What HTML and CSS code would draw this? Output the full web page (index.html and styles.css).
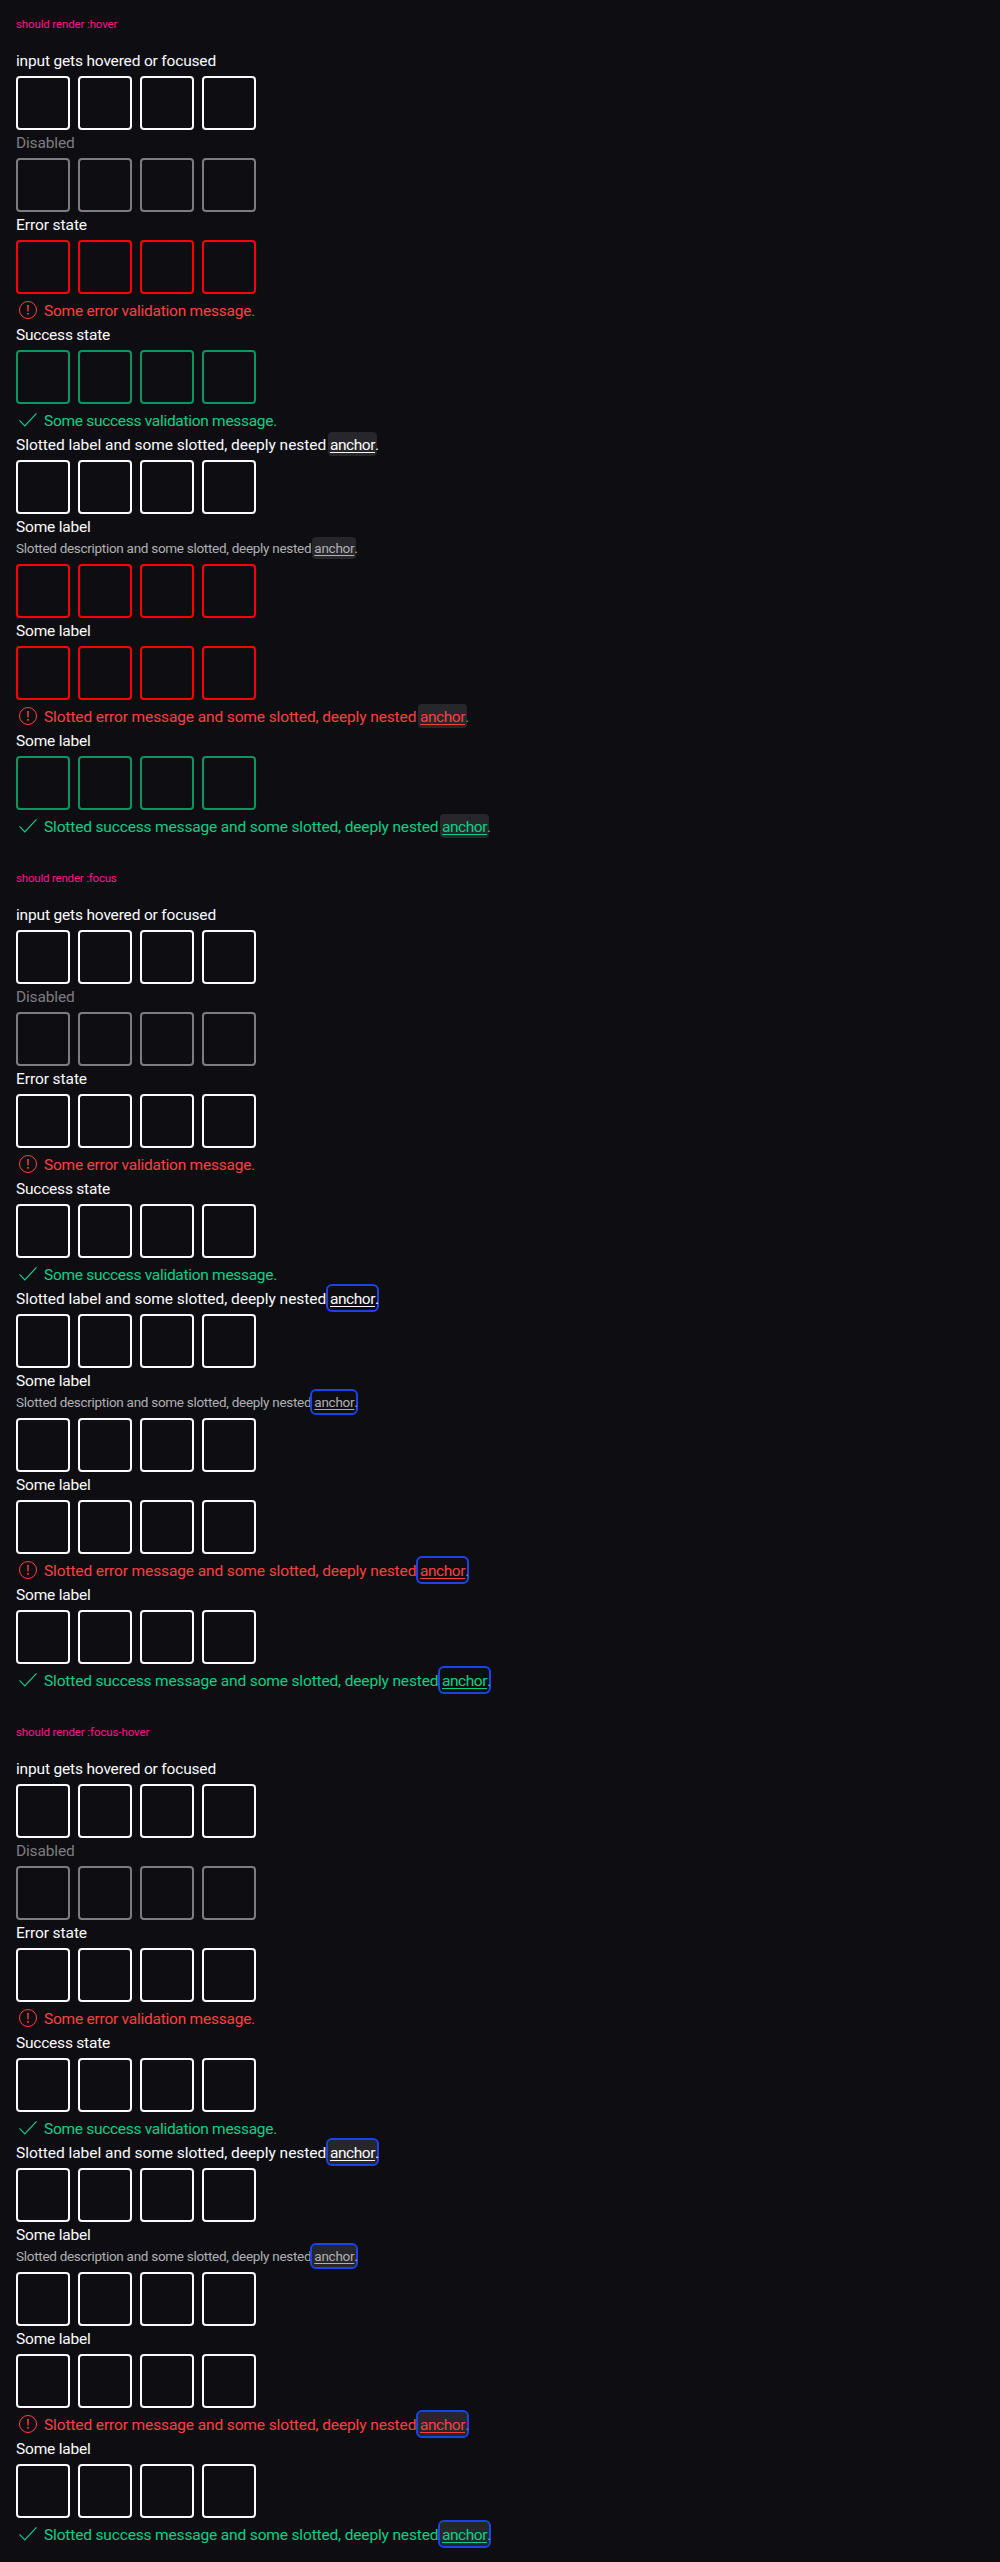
FILE: index.html
```html
<!DOCTYPE html>
<html lang="en">
<head>
<meta charset="utf-8">
<title>Pin code states</title>
<link rel="stylesheet" href="styles.css">
</head>
<body>
<svg class="sprite" aria-hidden="true">
  <symbol id="error" viewBox="0 0 24 24"><circle cx="12" cy="12" r="8.5" fill="none" stroke="currentColor"/><path d="M11.2 7h1.6l-.2 6.5h-1.2zM11.2 15h1.6v1.7h-1.6z" fill="currentColor"/></symbol>
  <symbol id="check" viewBox="0 0 24 24"><path d="M3.5 12.3 8.8 17.9 20.5 5.4" fill="none" stroke="currentColor" stroke-width="1.2"/></symbol>
</svg>

<section class="states hover">
  <h2 class="title t-hover">should render :hover</h2>
  <div class="label t-input">input gets hovered or focused</div>
  <div class="pins"><i></i><i></i><i></i><i></i></div>
  <div class="label disabled">Disabled</div>
  <div class="pins off"><i></i><i></i><i></i><i></i></div>
  <div class="label t-error">Error state</div>
  <div class="pins error"><i></i><i></i><i></i><i></i></div>
  <div class="message bad"><svg><use href="#error"/></svg><span class="t-some-error">Some error validation message.</span></div>
  <div class="label t-success">Success state</div>
  <div class="pins success"><i></i><i></i><i></i><i></i></div>
  <div class="message good"><svg><use href="#check"/></svg><span class="t-some-success">Some success validation message.</span></div>
  <div class="label t-slotted">Slotted label and some slotted, deeply nested <a>anchor</a>.</div>
  <div class="pins"><i></i><i></i><i></i><i></i></div>
  <div class="label t-some">Some label</div>
  <div class="description">Slotted description and some slotted, deeply nested <a>anchor</a>.</div>
  <div class="pins error"><i></i><i></i><i></i><i></i></div>
  <div class="label t-some">Some label</div>
  <div class="pins error"><i></i><i></i><i></i><i></i></div>
  <div class="message bad"><svg><use href="#error"/></svg><span class="t-slotted-error">Slotted error message and some slotted, deeply nested <a>anchor</a>.</span></div>
  <div class="label t-some">Some label</div>
  <div class="pins success"><i></i><i></i><i></i><i></i></div>
  <div class="message good"><svg><use href="#check"/></svg><span class="t-slotted-success">Slotted success message and some slotted, deeply nested <a>anchor</a>.</span></div>
</section>

<section class="states focus">
  <h2 class="title t-focus">should render :focus</h2>
  <div class="label t-input">input gets hovered or focused</div>
  <div class="pins"><i></i><i></i><i></i><i></i></div>
  <div class="label disabled">Disabled</div>
  <div class="pins off"><i></i><i></i><i></i><i></i></div>
  <div class="label t-error">Error state</div>
  <div class="pins"><i></i><i></i><i></i><i></i></div>
  <div class="message bad"><svg><use href="#error"/></svg><span class="t-some-error">Some error validation message.</span></div>
  <div class="label t-success">Success state</div>
  <div class="pins"><i></i><i></i><i></i><i></i></div>
  <div class="message good"><svg><use href="#check"/></svg><span class="t-some-success">Some success validation message.</span></div>
  <div class="label t-slotted">Slotted label and some slotted, deeply nested <a>anchor</a>.</div>
  <div class="pins"><i></i><i></i><i></i><i></i></div>
  <div class="label t-some">Some label</div>
  <div class="description">Slotted description and some slotted, deeply nested <a>anchor</a>.</div>
  <div class="pins"><i></i><i></i><i></i><i></i></div>
  <div class="label t-some">Some label</div>
  <div class="pins"><i></i><i></i><i></i><i></i></div>
  <div class="message bad"><svg><use href="#error"/></svg><span class="t-slotted-error">Slotted error message and some slotted, deeply nested <a>anchor</a>.</span></div>
  <div class="label t-some">Some label</div>
  <div class="pins"><i></i><i></i><i></i><i></i></div>
  <div class="message good"><svg><use href="#check"/></svg><span class="t-slotted-success">Slotted success message and some slotted, deeply nested <a>anchor</a>.</span></div>
</section>

<section class="states hover focus">
  <h2 class="title t-focus-hover">should render :focus-hover</h2>
  <div class="label t-input">input gets hovered or focused</div>
  <div class="pins"><i></i><i></i><i></i><i></i></div>
  <div class="label disabled">Disabled</div>
  <div class="pins off"><i></i><i></i><i></i><i></i></div>
  <div class="label t-error">Error state</div>
  <div class="pins"><i></i><i></i><i></i><i></i></div>
  <div class="message bad"><svg><use href="#error"/></svg><span class="t-some-error">Some error validation message.</span></div>
  <div class="label t-success">Success state</div>
  <div class="pins"><i></i><i></i><i></i><i></i></div>
  <div class="message good"><svg><use href="#check"/></svg><span class="t-some-success">Some success validation message.</span></div>
  <div class="label t-slotted">Slotted label and some slotted, deeply nested <a>anchor</a>.</div>
  <div class="pins"><i></i><i></i><i></i><i></i></div>
  <div class="label t-some">Some label</div>
  <div class="description">Slotted description and some slotted, deeply nested <a>anchor</a>.</div>
  <div class="pins"><i></i><i></i><i></i><i></i></div>
  <div class="label t-some">Some label</div>
  <div class="pins"><i></i><i></i><i></i><i></i></div>
  <div class="message bad"><svg><use href="#error"/></svg><span class="t-slotted-error">Slotted error message and some slotted, deeply nested <a>anchor</a>.</span></div>
  <div class="label t-some">Some label</div>
  <div class="pins"><i></i><i></i><i></i><i></i></div>
  <div class="message good"><svg><use href="#check"/></svg><span class="t-slotted-success">Slotted success message and some slotted, deeply nested <a>anchor</a>.</span></div>
</section>
</body>
</html>
```
FILE: styles.css
```css
* { box-sizing: border-box; }

body {
  margin: 0;
  background: #0e0e12;
  color: #fbfcff;
  font: 15.5px/24px Roboto, "Liberation Sans", sans-serif;
  white-space: nowrap;
}

.sprite { display: none; }

.states { height: 854px; padding: 16px; }

.title {
  margin: 0 0 16px;
  color: #fc1490;
  font-size: 11.5px;
  font-weight: 400;
  line-height: 16px;
}

.label { height: 24px; padding-top: 1px; }
.disabled { color: #7c7d82; letter-spacing: -.16px; }

.pins {
  display: flex;
  gap: 8px;
  margin-top: 4px;
  color: #fbfcff;
}
.pins i {
  width: 54px;
  height: 54px;
  border: 2px solid;
  border-radius: 4px;
}
.pins.off { color: #7c7d82; }
.pins.error { color: #ff0000; }
.pins.success { color: #0b9660; }

.message {
  display: flex;
  gap: 4px;
  height: 24px;
  margin-top: 4px;
}
.message svg { width: 24px; height: 24px; }
.message span { padding-top: 1px; }
.bad { color: #fc4040; }
.good { color: #09d087; }

.description {
  height: 22px;
  color: #afb0b3;
  font-size: 13.5px;
  line-height: 20px;
  letter-spacing: -.29px;
}

a {
  display: inline-block;
  width: 49px;
  height: 24px;
  margin: -1px -2px 0;
  padding: 0 2px;
  border-radius: 4px;
  line-height: 26px;
  letter-spacing: -.457px;
  text-decoration: underline;
  text-decoration-thickness: 1px;
  text-underline-offset: 2px;
  vertical-align: top;
}
.description a {
  width: 44px;
  height: 22px;
  line-height: 22px;
  letter-spacing: -.266px;
}
.hover a { background: #26262b; }
.focus a { outline: 2px solid #1a44ea; }

/* Tracking per string */
.t-hover { letter-spacing: -.133px; }
.t-focus { letter-spacing: -.195px; }
.t-focus-hover { letter-spacing: -.108px; }
.t-input { letter-spacing: -.17px; }
.t-error { letter-spacing: -.08px; }
.t-success { letter-spacing: -.218px; }
.t-some { letter-spacing: -.19px; }
.t-some-error { letter-spacing: -.237px; }
.t-some-success { letter-spacing: -.294px; }
.t-slotted { letter-spacing: -.036px; }
.t-slotted-error { letter-spacing: -.119px; }
.t-slotted-success { letter-spacing: -.157px; }
```
